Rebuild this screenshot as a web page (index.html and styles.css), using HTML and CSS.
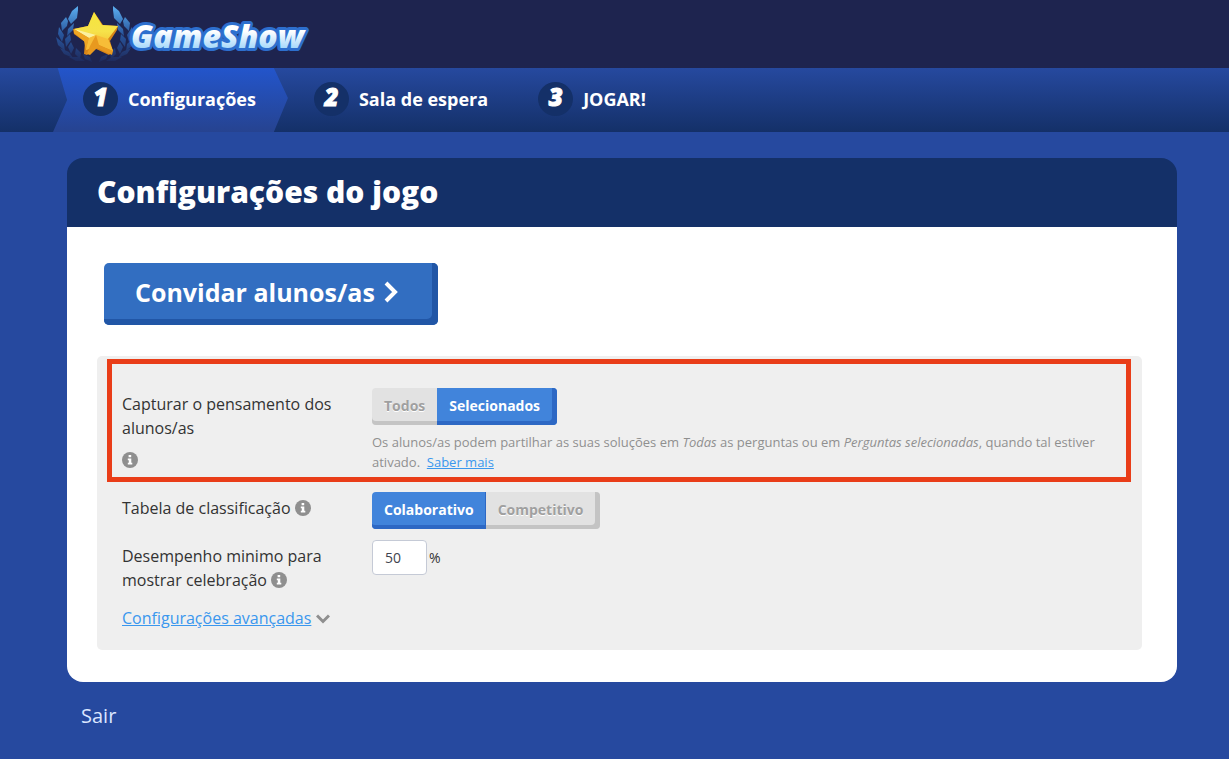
FILE: index.html
```html
<!DOCTYPE html>
<html lang="pt">
<head>
    <meta charset="UTF-8">
    <meta name="viewport" content="width=device-width, initial-scale=1.0">
    <title>GameShow - Configurações do jogo</title>
    <link rel="stylesheet" href="styles.css">
</head>
<body>
    <svg width="0" height="0" class="sprite" aria-hidden="true">
        <symbol id="icon-info" viewBox="0 0 16 16">
            <circle cx="8" cy="8" r="8" fill="#8f8f8f"/>
            <path d="M6.6 3h2.6v2.200H6.600zM5.800 6.400h3.500v4.400h1V12.600H5.800v-1.800h1V8.200h-1z" fill="#fff"/>
        </symbol>
    </svg>

    <header class="header">
        <svg class="logo" width="262" height="64" viewBox="54 2 262 64" role="img" aria-label="GameShow">
            <defs>
                <linearGradient id="leaf" gradientUnits="userSpaceOnUse" x1="0" y1="6" x2="0" y2="62">
                    <stop offset="0" stop-color="#5cb0f2"/>
                    <stop offset="0.5" stop-color="#28559c"/>
                    <stop offset="1" stop-color="#1e2a5c"/>
                </linearGradient>
                <linearGradient id="gold" x1="0" y1="0" x2="0" y2="1">
                    <stop offset="0" stop-color="#f5e63c"/>
                    <stop offset="0.5" stop-color="#f6e24a"/>
                    <stop offset="1" stop-color="#f3b52c"/>
                </linearGradient>
                <linearGradient id="word" x1="0" y1="0" x2="0" y2="1">
                    <stop offset="0.4" stop-color="#fff"/>
                    <stop offset="0.8" stop-color="#a5d8fb"/>
                </linearGradient>
                <g id="branch">
                    <path d="M78 6l-6 5-4 8 3 5 6-6 1-8z"/>
                    <path d="M66 17l-5 6 1 8 5-5 1-5z"/>
                    <path d="M74 23l-6 6-1 7 6-6z"/>
                    <path d="M59 27l-1 7 4 8 2-7z"/>
                    <path d="M70 34l-5 5 1 8 5-7z"/>
                    <path d="M56 37l2 8 7 6-1-7z"/>
                    <path d="M71 42l-3 5 3 7 3-6z"/>
                    <path d="M60 48l4 6 9 4-4-6z"/>
                    <path d="M76 48l-1 6 5 5 1-6z"/>
                    <path d="M69 57l7 4 9 0-6-4z"/>
                    <path d="M83 54l2 5 7 3-2-5z"/>
                </g>
            </defs>
            <g fill="url(#leaf)">
                <use href="#branch"/>
                <use href="#branch" transform="matrix(-1 0 0 1 191 0)"/>
            </g>
            <path d="M94 12l9 13 15 1-1 4-7 11 3 10-4 4-15-7-7 7-3-1 1-12-11-8-1-5 15-3z" fill="#d98618"/>
            <path d="M94 12l8 13 16 1-10 13 5 12-14-6-13 5 3-12-15-9 14-3z" fill="url(#gold)"/>
            <path d="M74 29l15 9 7-3-22-6z" fill="#fbf0a0"/>
            <path d="M74 29l15 9-3 12-2-9-10-8z" fill="#eea523"/>
            <path d="M96 35l12 4 5 12-14-6-13 5 3-12z" fill="#f7bd38"/>
            <path d="M96 35l3 10 14 6-1 4-15-7-7 7-3-1 3-8z" fill="#e8991f"/>
            <text class="logo-text logo-outline" x="131" y="48">GameShow</text>
            <text class="logo-text" x="131" y="48" fill="url(#word)" aria-hidden="true">GameShow</text>
        </svg>
    </header>

    <nav class="steps">
        <a href="#" class="step active"><span class="step-number">1</span>Configurações</a>
        <a href="#" class="step"><span class="step-number">2</span>Sala de espera</a>
        <a href="#" class="step"><span class="step-number">3</span>JOGAR!</a>
    </nav>

    <main class="container">
        <section class="card">
            <h1 class="card-title">Configurações do jogo</h1>
            <div class="card-body">
                <button type="button" class="btn-invite">
                    Convidar alunos/as
                    <svg width="16" height="24" viewBox="0 0 16 24" aria-hidden="true"><path d="M3 3l9 9-9 9" fill="none" stroke="#fff" stroke-width="4"/></svg>
                </button>

                <div class="settings">
                    <div class="row highlight">
                        <div class="row-label">
                            Capturar o pensamento dos alunos/as
                            <svg class="info info-block" width="16" height="16" aria-hidden="true"><use href="#icon-info"/></svg>
                        </div>
                        <div class="row-control">
                            <div class="toggle">
                                <button type="button" class="toggle-btn">Todos</button>
                                <button type="button" class="toggle-btn on">Selecionados</button>
                            </div>
                            <p class="help">Os alunos/as podem partilhar as suas soluções em <em>Todas</em> as perguntas ou em <em>Perguntas selecionadas</em>, quando tal estiver ativado.&nbsp; <a href="#">Saber mais</a></p>
                        </div>
                    </div>

                    <div class="row">
                        <div class="row-label">
                            Tabela de classificação
                            <svg class="info" width="16" height="16" aria-hidden="true"><use href="#icon-info"/></svg>
                        </div>
                        <div class="row-control">
                            <div class="toggle">
                                <button type="button" class="toggle-btn on">Colaborativo</button>
                                <button type="button" class="toggle-btn">Competitivo</button>
                            </div>
                        </div>
                    </div>

                    <div class="row">
                        <label class="row-label" for="performance">
                            Desempenho minimo para mostrar celebração
                            <svg class="info" width="16" height="16" aria-hidden="true"><use href="#icon-info"/></svg>
                        </label>
                        <div class="row-control percent">
                            <input type="text" id="performance" value="50"><span>%</span>
                        </div>
                    </div>

                    <div class="advanced">
                        <a href="#">Configurações avançadas</a>
                        <svg width="14" height="10" viewBox="0 0 14 10" aria-hidden="true"><path d="M1 1.500l6 6 6-6" fill="none" stroke="#8f8f8f" stroke-width="3"/></svg>
                    </div>
                </div>
            </div>
        </section>
        <a href="#" class="exit">Sair</a>
    </main>
</body>
</html>
```

FILE: styles.css
```css
* {
    box-sizing: border-box;
}

body {
    margin: 0;
    background-color: #26499f;
    font-family: "Open Sans", sans-serif;
    font-size: 16px;
    line-height: 24px;
    color: #333;
}

button,
input {
    font-family: inherit;
}

a {
    color: #3a97ee;
}

.sprite {
    display: block;
}

/* header */
.header {
    height: 68px;
    padding: 2px 54px;
    background-color: #1e244f;
}

.logo {
    display: block;
}

.logo-text {
    font-size: 32px;
    font-weight: 800;
    font-style: italic;
}

.logo-outline {
    fill: #2d6fce;
    stroke: #2d6fce;
    stroke-width: 6px;
    stroke-linejoin: round;
}

/* steps */
.steps {
    display: flex;
    height: 64px;
    padding-left: 53px;
    background: linear-gradient(#26499f, #143068);
}

.step {
    display: flex;
    align-items: center;
    padding: 0 24px 2px 26px;
    font-size: 18px;
    font-weight: 700;
    color: #fff;
    text-decoration: none;
}

.step.active {
    padding: 0 32px 2px 30px;
    background: linear-gradient(#2355cb, #264390);
    clip-path: polygon(2% 0, 94% 0, 100% 47%, 94% 100%, 0 100%, 6% 50%);
}

.step-number {
    width: 35px;
    height: 34px;
    margin-right: 10px;
    border-radius: 50%;
    background-color: #143068;
    font-size: 24px;
    font-weight: 800;
    font-style: italic;
    line-height: 30px;
    text-align: center;
    -webkit-text-stroke: 1px #fff;
}

/* card */
.container {
    padding: 26px 52px 28px 67px;
}

.card {
    border-radius: 16px;
    overflow: hidden;
}

.card-title {
    margin: 0;
    padding: 14px 30px 15px;
    background-color: #143068;
    font-size: 30px;
    font-weight: 800;
    line-height: 40px;
    color: #fff;
}

.card-body {
    padding: 36px 35px 32px 30px;
    background-color: #fff;
}

.btn-invite {
    display: flex;
    align-items: center;
    gap: 8px;
    height: 62px;
    margin-left: 7px;
    padding: 0 39px 5px 31px;
    border: 0;
    border-radius: 5px;
    background-color: #326ec1;
    box-shadow: inset -6px -6px #2156a6;
    font-size: 25px;
    font-weight: 700;
    line-height: 36px;
    color: #fff;
    cursor: pointer;
}

/* settings */
.settings {
    margin-top: 31px;
    padding: 3px 11px 20px 10px;
    border-radius: 5px;
    background-color: #efefef;
}

.row {
    display: flex;
    padding: 10px 15px 1px;
}

.row.highlight {
    padding: 24px 10px 4px;
    border: 5px solid #e93d18;
}

.row-label {
    flex: 0 0 250px;
    padding: 4px 35px 0 0;
}

.row-control {
    flex: 1;
}

.info {
    vertical-align: -2px;
}

.info-block {
    display: block;
    margin-top: 12px;
}

.toggle {
    display: flex;
}

.toggle-btn {
    height: 37px;
    padding: 0 12px 2px;
    border: 0;
    background-color: #e2e2e2;
    box-shadow: inset 0 -4px #c4c4c4;
    font-size: 14px;
    font-weight: 700;
    color: #a0a0a0;
    text-shadow: 0 1px #fff;
    cursor: pointer;
}

.toggle-btn.on {
    background-color: #4184db;
    box-shadow: inset -1px -4px #2d68c4;
    color: #fff;
    text-shadow: none;
}

.toggle-btn:first-child {
    border-radius: 4px 0 0 4px;
}

.toggle-btn:last-child {
    padding-right: 17px;
    border-radius: 0 4px 4px 0;
    box-shadow: inset -5px -4px #c4c4c4;
}

.toggle-btn.on:last-child {
    box-shadow: inset -5px -4px #2d68c4;
}

.help {
    margin: 7px 0 1px;
    font-size: 13px;
    line-height: 20px;
    color: #8f8f8f;
}

.percent {
    display: flex;
    align-items: center;
    align-self: flex-start;
    gap: 2px;
    font-size: 14px;
}

.percent input {
    width: 55px;
    height: 35px;
    padding: 0 12px;
    border: 1px solid #c5cad6;
    border-radius: 4px;
    background-color: #fff;
    font-size: 14px;
    color: #3f4450;
}

.advanced {
    padding: 13px 15px 0;
}

.exit {
    display: inline-block;
    margin: 20px 14px 0;
    font-size: 20px;
    line-height: 28px;
    color: #dbe6ff;
    text-decoration: none;
}
```
